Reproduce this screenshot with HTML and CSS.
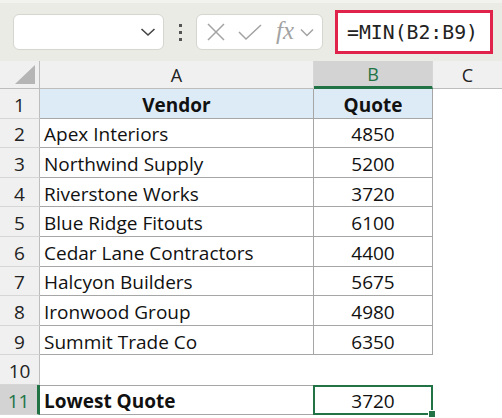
FILE: index.html
```html
<!DOCTYPE html>
<html lang="en">

<head>
    <meta charset="utf-8">
    <title>Lowest Quote</title>
    <link rel="stylesheet" href="styles.css">
</head>

<body>
    <div class="toolbar">
        <div class="namebox">
            <svg class="chev" width="16" height="10" viewBox="0 0 16 10"><path d="M1.5 2 L8 8 L14.5 2" fill="none" stroke="#444" stroke-width="1.6"/></svg>
        </div>
        <div class="dots"><span></span><span></span><span></span></div>
        <div class="fbuttons">
            <svg width="20" height="20" viewBox="0 0 20 20"><path d="M2 2 L18 18 M18 2 L2 18" stroke="#a3a3a3" stroke-width="1.5"/></svg>
            <svg width="24" height="18" viewBox="0 0 24 18"><path d="M1 9 L8 16 L23 2" fill="none" stroke="#a3a3a3" stroke-width="1.5"/></svg>
            <span class="fx">fx</span>
            <svg width="14" height="9" viewBox="0 0 14 9"><path d="M1 1.5 L7 7.5 L13 1.5" fill="none" stroke="#a3a3a3" stroke-width="1.5"/></svg>
        </div>
        <div class="formula">=MIN(B2:B9)</div>
    </div>

    <div class="sheet">
        <div class="hd corner"><svg width="20" height="19" viewBox="0 0 20 19"><path d="M20 0 L20 19 L0 19 Z" fill="#b5b5b5"/></svg></div>
        <div class="hd">A</div>
        <div class="hd sel">B</div>
        <div class="hd last">C</div>

        <div class="rn">1</div>
        <div class="c head">Vendor</div>
        <div class="c head num">Quote</div>
        <div class="blank"></div>

        <div class="rn">2</div><div class="c">Apex Interiors</div><div class="c num">4850</div><div class="blank"></div>
        <div class="rn">3</div><div class="c">Northwind Supply</div><div class="c num">5200</div><div class="blank"></div>
        <div class="rn">4</div><div class="c">Riverstone Works</div><div class="c num">3720</div><div class="blank"></div>
        <div class="rn">5</div><div class="c">Blue Ridge Fitouts</div><div class="c num">6100</div><div class="blank"></div>
        <div class="rn">6</div><div class="c">Cedar Lane Contractors</div><div class="c num">4400</div><div class="blank"></div>
        <div class="rn">7</div><div class="c">Halcyon Builders</div><div class="c num">5675</div><div class="blank"></div>
        <div class="rn">8</div><div class="c">Ironwood Group</div><div class="c num">4980</div><div class="blank"></div>
        <div class="rn">9</div><div class="c">Summit Trade Co</div><div class="c num">6350</div><div class="blank"></div>

        <div class="rn">10</div><div class="blank"></div><div class="blank"></div><div class="blank"></div>

        <div class="rn selrow">11</div>
        <div class="c total">Lowest Quote</div>
        <div class="c num active">3720<span class="handle"></span></div>
        <div class="blank"></div>
    </div>
</body>

</html>
```

FILE: styles.css
```css
* {
    margin: 0;
    box-sizing: border-box;
}

body {
    width: 502px;
    height: 418px;
    overflow: hidden;
    background: #fff;
    font-family: 'Open Sans', sans-serif;
    color: #111;
}

.toolbar {
    height: 61px;
    background: #e9ebe4;
    border-top: 3px solid #f2f3ee;
    display: flex;
    align-items: center;
    padding-left: 13px;
}

.namebox {
    width: 151px;
    height: 36px;
    background: #fff;
    border: 1px solid #d4d6cf;
    border-radius: 6px;
    display: flex;
    align-items: center;
    justify-content: flex-end;
    padding-right: 7px;
}

.dots {
    width: 32px;
    display: flex;
    flex-direction: column;
    align-items: center;
    gap: 4px;
}

.dots span {
    width: 3px;
    height: 3px;
    background: #555;
}

.fbuttons {
    width: 127px;
    height: 36px;
    background: #fff;
    border: 1px solid #d4d6cf;
    border-radius: 6px;
    display: flex;
    align-items: center;
    padding-left: 9px;
    gap: 12px;
}

.fx {
    font-family: 'Liberation Serif', serif;
    font-style: italic;
    font-size: 25px;
    color: #a3a3a3;
    line-height: 1;
    margin-left: 2px;
    margin-right: -6px;
    margin-top: -3px;
}

.formula {
    margin-left: 12px;
    width: 158px;
    height: 44px;
    background: #fff;
    border: 3px solid #e0234a;
    font-family: 'DejaVu Sans Mono', monospace;
    font-size: 19.8px;
    color: #222;
    display: flex;
    align-items: center;
    padding-left: 9px;
}

.sheet {
    display: grid;
    grid-template-columns: 40px 274px 119px 69px;
    grid-template-rows: 28px repeat(11, 29.6px);
    font-size: 19px;
}

.hd {
    background: #f0f0f0;
    border-right: 1px solid #d6d6d6;
    border-bottom: 1px solid #bdbdbd;
    display: flex;
    align-items: center;
    justify-content: center;
    font-size: 18px;
    color: #222;
}

.corner {
    justify-content: flex-end;
    align-items: flex-end;
    padding: 0 4px 4px 0;
    border-right-color: #bdbdbd;
}

.hd.sel {
    background: #d3d3d3;
    color: #217346;
    border-bottom: 3px solid #217346;
}

.hd.last {
    border-right: none;
}

.rn {
    background: #f0f0f0;
    border-right: 1px solid #bdbdbd;
    border-bottom: 1px solid #d6d6d6;
    display: flex;
    align-items: center;
    justify-content: center;
    padding-top: 3px;
    color: #222;
}

.rn.selrow {
    background: #d3d3d3;
    color: #217346;
    border-right: 3px solid #217346;
}

.c {
    border-right: 1px solid #a6a6a6;
    border-bottom: 1px solid #a6a6a6;
    display: flex;
    align-items: center;
    padding: 3px 0 0 4px;
    white-space: nowrap;
}

.c.num {
    justify-content: center;
    padding-left: 0;
}

.c.head {
    background: #ddebf7;
    font-weight: bold;
    justify-content: center;
    padding-left: 0;
}

.c.total {
    font-weight: bold;
    border-top: 1px solid #a6a6a6;
}

.c.active {
    position: relative;
    border: 2px solid #217346;
    margin-left: -1px;
}

.handle {
    position: absolute;
    right: -5px;
    bottom: -5px;
    width: 8px;
    height: 8px;
    background: #217346;
    border: 1px solid #fff;
}

.blank {
    background: #fff;
}
```
